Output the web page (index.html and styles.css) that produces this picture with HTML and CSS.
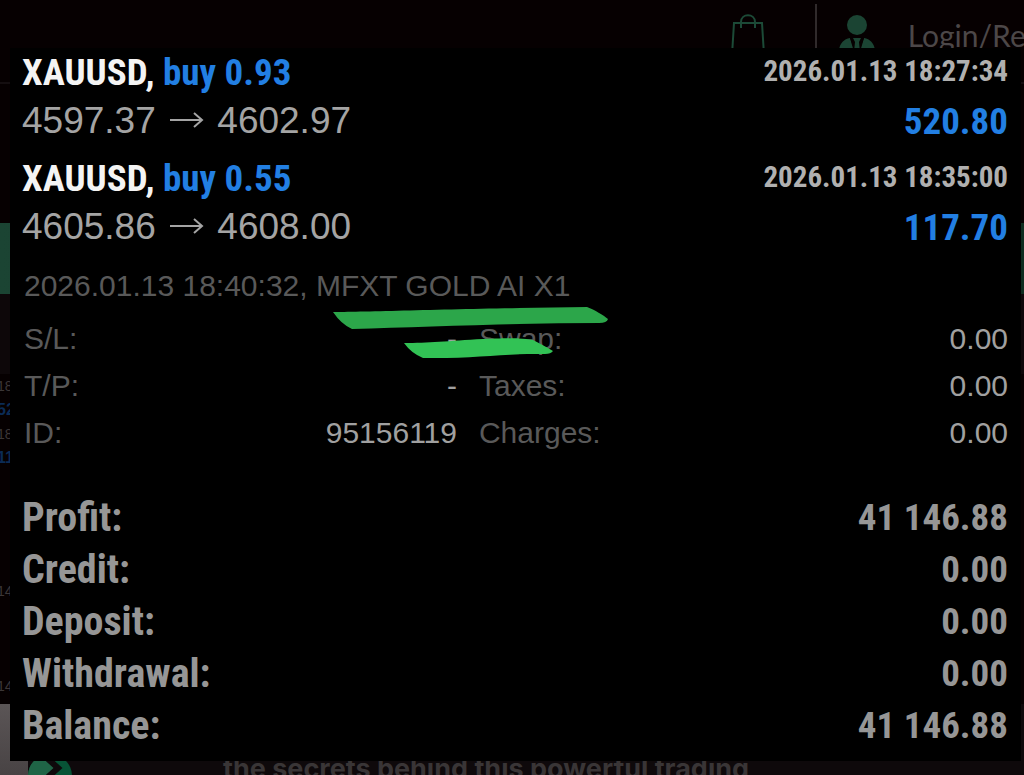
FILE: index.html
```
<!DOCTYPE html>
<html lang="en">
  <head>
    <meta charset="UTF-8" />
    <meta name="viewport" content="width=device-width, initial-scale=1.0" />
    <title>Trade history</title>
    <link rel="stylesheet" href="styles.css">
  </head>
  <body>
    <div class="page">
      <header class="site-header">
        <a class="cart" href="#" aria-label="Cart">
          <svg width="34" height="42" viewBox="0 0 34 42">
            <path d="M3 9H31L33 41H1Z M10 14V8C10 -1 24 -1 24 8V14" fill="none" stroke="#1c4a37" stroke-width="2" />
          </svg>
        </a>
        <span class="divider"></span>
        <a class="login" href="#">
          <svg width="36" height="40" viewBox="0 0 36 40">
            <circle cx="18" cy="11" r="10" fill="#1b4433" />
            <path d="M0 36C1 29 5 25 11 24L16 38H20L25 24C31 25 35 29 36 36V40H0Z" fill="#1b4433" />
            <path d="M11 24L15 38H21L25 24Z" fill="#060001" />
            <path d="M14 24H22L20 28L21 38H15L16 28Z" fill="#1b4433" />
          </svg>
          <span>Login/Register</span>
        </a>
      </header>
      <div class="banner"></div>
      <div class="history">
        <span class="time">18</span>
        <span class="gain">52</span>
        <span class="time">18</span>
        <span class="gain">11</span>
      </div>
      <div class="totals">
        <span>14</span>
        <span>14</span>
      </div>
      <div class="article">
        <div class="thumb"></div>
        <svg class="arrow" width="44" height="44" viewBox="0 0 44 44">
          <circle cx="22" cy="22" r="22" fill="#075336" />
          <path d="M22 0A22 22 0 0 0 22 44L28 14Z" fill="#1f6446" />
          <path d="M20 5L30 14L20 23" fill="none" stroke="#0e090b" stroke-width="6" />
        </svg>
        <p>the secrets behind this powerful trading</p>
      </div>
    </div>

    <main class="panel">
      <section class="trades">
        <div class="row head">
          <h2>XAUUSD, <span class="buy">buy 0.93</span></h2>
          <time>2026.01.13 18:27:34</time>
        </div>
        <div class="row price">
          <span class="move">4597.37 <svg width="34" height="18" viewBox="0 0 34 18"><path d="M0 9H32M24 2L32 9L24 16" /></svg> 4602.97</span>
          <span class="profit">520.80</span>
        </div>
        <div class="row head">
          <h2>XAUUSD, <span class="buy">buy 0.55</span></h2>
          <time>2026.01.13 18:35:00</time>
        </div>
        <div class="row price">
          <span class="move">4605.86 <svg width="34" height="18" viewBox="0 0 34 18"><path d="M0 9H32M24 2L32 9L24 16" /></svg> 4608.00</span>
          <span class="profit">117.70</span>
        </div>
      </section>

      <section class="details">
        <p>2026.01.13 18:40:32, MFXT GOLD AI X1</p>
        <table>
          <tr><th>S/L:</th><td>-</td><th>Swap:</th><td>0.00</td></tr>
          <tr><th>T/P:</th><td>-</td><th>Taxes:</th><td>0.00</td></tr>
          <tr><th>ID:</th><td>95156119</td><th>Charges:</th><td>0.00</td></tr>
        </table>
        <!-- marker strokes -->
        <svg class="marker" width="276" height="54" viewBox="0 0 276 54">
          <path d="M0 6C30 6 150 2 254 1C262 4 270 9 275 13Q274 17 266 17C180 17 90 21 19 23Q8 18 0 6Z" fill="#2ca64a" />
          <path d="M71 37C95 37 115 35 150 33C180 32 190 32 200 34C207 38 214 41 220 45Q218 48 212 48C175 47 140 53 90 52Q78 47 71 37Z" fill="#32c255" />
        </svg>
      </section>

      <table class="summary">
        <tr><th>Profit:</th><td>41 146.88</td></tr>
        <tr><th>Credit:</th><td>0.00</td></tr>
        <tr><th>Deposit:</th><td>0.00</td></tr>
        <tr><th>Withdrawal:</th><td>0.00</td></tr>
        <tr><th>Balance:</th><td>41 146.88</td></tr>
      </table>
    </main>
  </body>
</html>
```
FILE: styles.css
```
* {
  box-sizing: border-box;
}
body {
  margin: 0;
  height: 100vh;
  overflow: hidden;
  background-color: #060001;
  font-family: "Liberation Sans", Arial, sans-serif;
}
h2,
p {
  margin: 0;
}

/* dimmed page behind the panel */
.page {
  height: 100vh;
  overflow: hidden;
  display: flex;
  flex-direction: column;
}
.site-header {
  flex: none;
  height: 84px;
  padding-top: 4px;
  border-bottom: 2px solid #140e10;
  display: flex;
  justify-content: flex-end;
  align-items: flex-start;
  margin-right: -75px;
}
.cart {
  padding-top: 10px;
}
.divider {
  width: 2px;
  height: 60px;
  margin: 0 22px 0 50px;
  background-color: #302a2b;
}
.login {
  display: flex;
  gap: 33px;
  padding-top: 10px;
  font-family: Lato, sans-serif;
  font-size: 30px;
  line-height: 42px;
  color: #4c4748;
  text-decoration: none;
}
.banner {
  flex: none;
  height: 71px;
  margin-top: 139px;
  background: linear-gradient(90deg, #1b4433, #0e2d20);
}
.history {
  flex: none;
  height: 285px;
  padding-top: 80px;
  display: flex;
  flex-direction: column;
  background: linear-gradient(#0d0709 80px, #060001 80px);
}
.history span,
.totals span {
  margin-left: -3px;
  font-size: 14px;
  line-height: 24px;
  color: #3b3637;
}
.history .gain {
  font-size: 16px;
  font-weight: bold;
  color: #0b2b55;
}
.totals {
  flex: none;
  height: 125px;
  display: flex;
  flex-direction: column;
  gap: 71px;
}
.article {
  flex: none;
  height: 71px;
  display: flex;
  align-items: flex-start;
  background-color: #0e090b;
}
.thumb {
  width: 28px;
  height: 71px;
  background: linear-gradient(#5b5556, #484344);
}
.arrow {
  margin-top: 50px;
}
.article p {
  margin: 50px 0 0 151px;
  font-family: Inter, sans-serif;
  font-size: 27px;
  font-weight: bold;
  line-height: 30px;
  color: #393536;
  white-space: nowrap;
}

/* trade panel */
.panel {
  position: fixed;
  inset: 48px 3px 14px 10px;
  overflow: hidden;
  padding: 0 13px 0 12px;
  background-color: #000;
}
.row {
  display: flex;
  justify-content: space-between;
  align-items: center;
}
.head {
  height: 48px;
}
.price {
  height: 58px;
  padding-bottom: 8px;
}
.head h2,
.head time,
.profit,
.summary {
  font-family: "Roboto Condensed", "Arial Narrow", sans-serif;
  font-weight: bold;
}
.head h2 {
  font-size: 37px;
  color: #f4f4f4;
}
.head time {
  font-size: 29px;
  padding-bottom: 2px;
  color: #b0b0b0;
}
.head .buy,
.profit {
  color: #227fe3;
}
.move {
  font-size: 37px;
  color: #a4a4a4;
}
.move svg {
  margin: 0 3px 0 4px;
  vertical-align: 4px;
  fill: none;
  stroke: #a4a4a4;
  stroke-width: 2;
}
.profit {
  font-size: 37px;
}
.details {
  position: relative;
  padding: 2px 0 0 2px;
  font-size: 30px;
  line-height: 47px;
  color: #595959;
}
.details p {
  padding-bottom: 6px;
}
table {
  width: 100%;
  border-collapse: collapse;
}
th,
td {
  padding: 0;
}
th {
  text-align: left;
}
td {
  text-align: right;
}
.details th {
  width: 16%;
  font-weight: normal;
}
.details td {
  color: #a0a0a0;
}
.details td:nth-child(2) {
  width: 28%;
}
.details th:nth-child(3) {
  padding-left: 22px;
}
.marker {
  position: absolute;
  left: 311px;
  top: 46px;
}
.summary {
  margin-top: 36px;
  font-size: 40px;
  line-height: 52px;
  color: #969696;
}
.summary td {
  font-size: 37px;
}
```
